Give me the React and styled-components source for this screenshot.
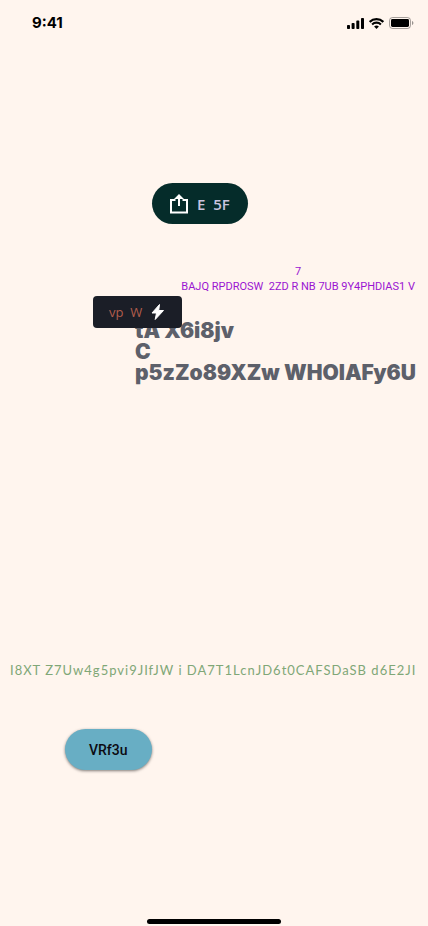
import React from "react";
import styled, { createGlobalStyle } from "styled-components";

const GlobalStyle = createGlobalStyle`
  * { box-sizing: border-box; }
  body { margin: 0; background: #fff5ee; }
  button { border: 0; font: inherit; cursor: pointer; }
`;

const Screen = styled.div`
  display: flex;
  flex-direction: column;
  min-height: 100vh;
  overflow: hidden;
  background: #fff5ee;
`;

const StatusBar = styled.header`
  display: flex;
  align-items: center;
  justify-content: space-between;
  height: 46px;
  padding: 0 14px 0 32px;
`;

const Clock = styled.time`
  font: 700 15px/18px Inter, sans-serif;
  color: #000;
`;

const StatusIcons = styled.div`
  display: flex;
  align-items: center;
  gap: 5px;
`;

const Content = styled.main`
  display: flex;
  flex-direction: column;
  flex: 1;
  align-items: flex-start;
  padding-top: 137px;
`;

const ShareButton = styled.button`
  display: flex;
  align-items: center;
  gap: 8px;
  height: 41px;
  margin-left: 152px;
  padding: 0 18px 0 17px;
  border-radius: 21px;
  background: #052c2a;
  color: #cac4df;
  font: 600 15px/20px "Open Sans", sans-serif;
  white-space: pre;
`;

const Caption = styled.p`
  align-self: flex-end;
  margin: 40px 13px 0 0;
  color: #9a14d2;
  font: 400 11px/15px "Roboto", sans-serif;
  text-align: center;
  white-space: pre;
`;

const TitleBlock = styled.section`
  position: relative;
  align-self: stretch;
  margin-top: 26px;
  padding-left: 135px;
`;

const Title = styled.h1`
  margin: 0;
  color: #5d606a;
  font: 900 21px/21px Inter, sans-serif;
  white-space: pre;
`;

const FlashButton = styled.button`
  position: absolute;
  top: -24px;
  left: 93px;
  display: flex;
  align-items: center;
  gap: 8px;
  height: 32px;
  padding: 0 16px;
  border-radius: 4px;
  background: #1b1e27;
  color: #b25d4c;
  font: 400 13px/18px "Open Sans", sans-serif;
  white-space: pre;
`;

const Note = styled.p`
  margin: 277px 0 0 10px;
  color: #80a777;
  font: 400 13px/20px Lato, sans-serif;
  letter-spacing: 1px;
  white-space: pre;
`;

const ActionButton = styled.button`
  height: 41px;
  margin: 49px 0 0 65px;
  padding: 0 24px;
  border-radius: 21px;
  background: #68aec4;
  box-shadow: 0 1px 3px rgba(0, 0, 0, 0.5);
  color: #0c0a12;
  font: 500 14px/20px Roboto, sans-serif;
`;

const HomeIndicator = styled.div`
  align-self: center;
  width: 134px;
  height: 5px;
  margin-bottom: 2px;
  border-radius: 3px;
  background: #000;
`;

function Signal() {
  return (
    <svg width="17" height="11" viewBox="0 0 17 11" aria-hidden="true">
      <rect x="0" y="7" width="3" height="4" rx="0.8" />
      <rect x="4.6" y="5" width="3" height="6" rx="0.8" />
      <rect x="9.3" y="2.6" width="3" height="8.4" rx="0.8" />
      <rect x="14" y="0" width="3" height="11" rx="0.8" />
    </svg>
  );
}

function Wifi() {
  return (
    <svg width="15" height="11" viewBox="0 0 15 11" aria-hidden="true">
      <g fill="none" stroke="#000" strokeWidth="2.1">
        <path d="M.7 3.9a9.8 9.8 0 0 1 13.6 0" />
        <path d="M3.1 6.4a6.4 6.4 0 0 1 8.8 0" />
      </g>
      <path d="M7.5 11 5.1 8.6a3.5 3.5 0 0 1 4.8 0z" />
    </svg>
  );
}

function Battery() {
  return (
    <svg width="25" height="12" viewBox="0 0 25 12" aria-hidden="true">
      <rect x=".5" y=".5" width="21" height="11" rx="3" fill="none" stroke="#000" opacity=".35" />
      <rect x="2" y="2" width="18" height="8" rx="1.4" />
      <path d="M23 4v4c.8-.3 1.4-1.1 1.4-2S23.8 4.3 23 4z" opacity=".4" />
    </svg>
  );
}

function ShareIcon() {
  return (
    <svg width="20" height="20" viewBox="0 0 20 20" aria-hidden="true">
      <path d="M6.5 6H2v12.5h16V6h-4.5" fill="none" stroke="#fff" strokeWidth="2" />
      <path d="M10 0 5 5h4v7h2V5h4z" fill="#fff" />
    </svg>
  );
}

function BoltIcon() {
  return (
    <svg width="16" height="16" viewBox="0 0 16 16" aria-hidden="true">
      <path d="M9.5.5 2 9h4.5l-1.3 6.5L13.5 6.5H8.7z" fill="#fff" stroke="#fff" strokeLinejoin="round" />
    </svg>
  );
}

export default function App() {
  return (
    <Screen>
      <GlobalStyle />
      <StatusBar>
        <Clock>9:41</Clock>
        <StatusIcons>
          <Signal />
          <Wifi />
          <Battery />
        </StatusIcons>
      </StatusBar>
      <Content>
        <ShareButton type="button">
          <ShareIcon />
          {"E  5F"}
        </ShareButton>
        <Caption>{"7\nBAJQ RPDROSW  2ZD R NB 7UB 9Y4PHDIAS1 V"}</Caption>
        <TitleBlock>
          <Title>{"tA X6i8jv\nC\np5zZo89XZw WHOlAFy6U"}</Title>
          <FlashButton type="button">
            {"vp  W"}
            <BoltIcon />
          </FlashButton>
        </TitleBlock>
        <Note>I8XT Z7Uw4g5pvi9JIfJW i DA7T1LcnJD6t0CAFSDaSB d6E2JI</Note>
        <ActionButton type="button">VRf3u</ActionButton>
      </Content>
      <HomeIndicator />
    </Screen>
  );
}
